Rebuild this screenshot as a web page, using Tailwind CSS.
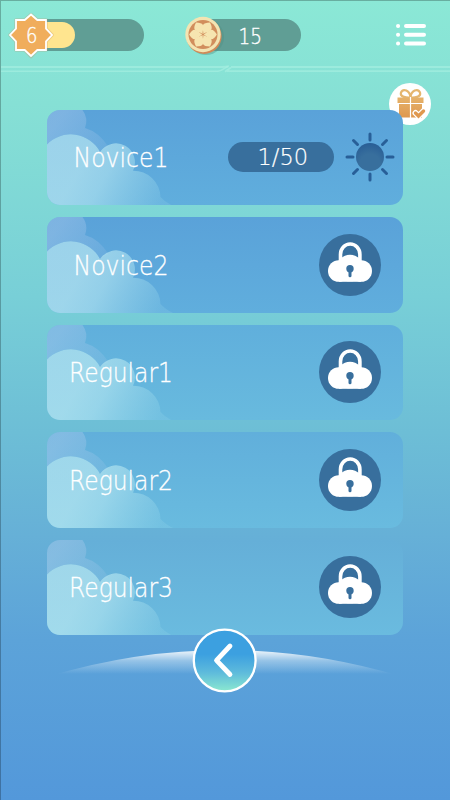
<!DOCTYPE html>
<html lang="en">
<head>
<meta charset="utf-8">
<title>Levels</title>
<script src="https://cdn.jsdelivr.net/npm/@tailwindcss/browser@4"></script>
</head>
<body class="bg-[#5398da]">
<svg class="absolute w-0 h-0" aria-hidden="true">
  <defs>
    <linearGradient id="front" gradientUnits="userSpaceOnUse" x1="35" y1="55" x2="112" y2="98">
      <stop offset="0" stop-color="#c0ecf3" stop-opacity=".64"/><stop offset=".3" stop-color="#b9e9f2" stop-opacity=".58"/><stop offset="1" stop-color="#a5e0ee" stop-opacity=".17"/>
    </linearGradient>
    <linearGradient id="back" gradientUnits="userSpaceOnUse" x1="15" y1="5" x2="65" y2="45">
      <stop offset="0" stop-color="#b3cdee" stop-opacity=".4"/><stop offset="1" stop-color="#b3cdee" stop-opacity=".1"/>
    </linearGradient>
    <radialGradient id="sun" cx=".5" cy=".75" r=".8"><stop offset=".45" stop-color="#386f9d"/><stop offset="1" stop-color="#275c95"/></radialGradient>
    <linearGradient id="gift" x1="0" y1="0" x2="0" y2="1"><stop offset="0" stop-color="#e5b26a"/><stop offset="1" stop-color="#df984f"/></linearGradient>
    <symbol id="cloud" viewBox="0 0 130 96">
      <path d="M0 0H35.5A19 19 0 0 1 38 18Q52 22 61.500 37A19 19 0 0 0 53 42A33 33 0 0 0 0 34.500Z" fill="url(#back)"/>
      <path d="M0 34.500A33 33 0 0 1 53 42A19 19 0 0 1 86 60.700A27 27 0 0 1 113.500 87Q118 92 126 96H0Z" fill="url(#front)"/>
    </symbol>
    <symbol id="lock" viewBox="0 0 62 62">
      <circle cx="31" cy="31" r="31" fill="#386f9d"/>
      <path d="M21.500 29V20.500A9.700 10.500 0 0 1 40.900 20.500V29" fill="none" stroke="#fff" stroke-width="3.600"/>
      <g fill="#fff"><circle cx="19.800" cy="37" r="10.800"/><circle cx="42.200" cy="37" r="10.800"/><circle cx="31" cy="34" r="13.300"/><rect x="19.800" y="30" width="22.400" height="17.800"/></g>
      <circle cx="31" cy="34.800" r="3.700" fill="#386f9d"/><path d="M31 35V41.800" stroke="#386f9d" stroke-width="3" stroke-linecap="round"/>
    </symbol>
  </defs>
</svg>
<main class="relative flex flex-col w-[450px] h-[800px] overflow-hidden text-white font-extralight font-['DejaVu_Sans','Lato',sans-serif] bg-origin-border bg-[linear-gradient(180deg,#8be8d6_0%,#86e0d5_13%,#78cfd7_37%,#6dbed6_54%,#66b0d7_67%,#5ca3d9_80%,#5398da_100%)] border-t border-l border-black/25">
  <header class="flex items-start h-[72px] shrink-0">
    <div class="relative mt-[18px] ml-[31px] w-[112px] h-[32px] rounded-r-full bg-[#609e95]">
      <div class="mt-[3px] w-[43px] h-[26px] rounded-r-full bg-[#ffe58f]"></div>
      <svg class="absolute -left-[27px] -top-[10px]" width="52" height="52" viewBox="0 0 52 52">
        <path d="M26 5.500L32.300 11H41V19.700L47 26L41 32.300V41H32.300L26 47.500L19.700 41H11V32.300L5 26L11 19.700V11H19.700Z" fill="#dc9551" opacity=".3" stroke="#c89564" stroke-width="3.600" stroke-linejoin="round"/>
        <path d="M26 5.500L32.300 11H41V19.700L47 26L41 32.300V41H32.300L26 47L19.700 41H11V32.300L5 26L11 19.700V11H19.700Z" fill="#f0ad5c" stroke="#fff" stroke-width="1.800"/>
        <text x="21" y="34" textLength="11.500" lengthAdjust="spacingAndGlyphs" font-size="22" fill="#fff" stroke="#fff" stroke-width=".4">6</text>
      </svg>
    </div>
    <div class="relative mt-[18px] ml-[62px] w-[95px] h-[32px] rounded-r-full bg-[#609e95]">
      <svg class="absolute -left-[22px] -top-[4px]" width="112" height="42" viewBox="0 0 112 42">
        <circle cx="22" cy="22" r="18" fill="#508f83" opacity=".4"/>
        <circle cx="20" cy="21.300" r="17.600" fill="#d18a58"/>
        <circle cx="19" cy="19.500" r="17.700" fill="#f3e4b2"/>
        <circle cx="19" cy="19.500" r="14.500" fill="#d18e5c"/>
        <g fill="#f6e5b0" transform="translate(19 19.500)">
          <path id="petal" d="M0 -.7C-.7 -2.500 -4.300 -5.500 -4.700 -8.500Q-4.700 -11 0 -13.900Q4.700 -11 4.700 -8.500C4.300 -5.500 .7 -2.500 0 -.7Z" transform="rotate(30)"/>
          <use href="#petal" transform="rotate(60)"/><use href="#petal" transform="rotate(120)"/><use href="#petal" transform="rotate(180)"/><use href="#petal" transform="rotate(240)"/><use href="#petal" transform="rotate(300)"/>
        </g>
        <text x="54.500" y="28.500" textLength="23.500" lengthAdjust="spacingAndGlyphs" font-size="22" fill="#fff" stroke="#fff" stroke-width=".4">15</text>
      </svg>
    </div>
    <svg class="mt-[22px] ml-[95px]" width="32" height="24" viewBox="0 0 32 24">
      <g stroke="#fff" stroke-width="4" stroke-linecap="round"><path d="M2 3H2.100M10 3H28M2 11.700H2.100M10 11.700H28M2 20.500H2.100M10 20.500H28"/></g>
    </svg>
  </header>
  <svg class="absolute -left-px top-[64px]" width="450" height="9" viewBox="0 0 450 9" fill="none" stroke="#a8efe2" stroke-opacity=".65">
    <path d="M0 2H222Q226 2 229 1.300" stroke-width="1.900"/><path d="M0 6.200H218Q221 6 225 3.200L228 1.500" stroke-width="1.500"/><path d="M231 2H450" stroke-width="1.900"/><path d="M225 6.700L231 2.500M227 6.200H450" stroke-width="1.800"/>
  </svg>
  <div class="absolute left-[388px] top-[82px] size-[42px] rounded-full bg-white">
    <svg width="42" height="42" viewBox="0 0 42 42">
      <g fill="none" stroke="#e5b66e" stroke-width="2.200"><path d="M21.500 14.500C18 15 10.500 14 12 9.500C14 5 21 7 21.500 14.500C22 7 29 5 31 9.500C32.500 14 25 15 21.500 14.500Z"/></g>
      <path d="M8.500 14.500H34.500V20H8.500ZM10 21H33V34.500H10Z" fill="url(#gift)"/>
      <path d="M21.500 14V35" stroke="#fff" stroke-width="1.200"/>
      <path d="M26.500 30L29.500 33L34.500 28" fill="none" stroke="#fff" stroke-width="6" stroke-linecap="round"/>
      <path d="M26.500 30L29.500 33L34.500 28" fill="none" stroke="#df984f" stroke-width="3.400" stroke-linecap="round"/>
    </svg>
  </div>
  <section class="relative mt-[36.500px] ml-[46px] w-[356px] flex flex-col gap-[12px]">
    <article class="relative h-[95.500px] rounded-[13px] overflow-hidden bg-linear-to-b from-[#5aa2d9] to-[#60aedd] flex items-center">
      <svg class="absolute left-0 top-0" width="130" height="96"><use href="#cloud"/></svg>
      <svg class="relative" width="181" height="96"><text x="26.500" y="57.500" textLength="95" lengthAdjust="spacingAndGlyphs" font-size="27" fill="#fff" stroke="#fff" stroke-width=".3">Novice1</text></svg>
      <div class="w-[106px] h-[30px] rounded-full bg-[#386f9d]"><svg width="106" height="30"><text x="29.500" y="23" textLength="50.500" lengthAdjust="spacingAndGlyphs" font-size="22.500" fill="#fff" stroke="#fff" stroke-width=".2">1/50</text></svg></div>
      <svg class="ml-[11px]" width="50" height="50" viewBox="-25 -25 50 50">
        <circle r="14" fill="url(#sun)"/>
        <g stroke="#285f98" stroke-width="3" stroke-linecap="round"><path d="M0 -17V-23M0 17V23M17 0H23M-17 0H-23M12.500 -12.500L16.500 -16.500M12.500 12.500L16.500 16.500M-12.500 12.500L-16.500 16.500M-12.500 -12.500L-16.500 -16.500"/></g>
      </svg>
    </article>
    <article class="relative h-[95.500px] rounded-[13px] overflow-hidden bg-linear-to-b from-[#5aa2d9] to-[#60aedd] flex items-center">
      <svg class="absolute left-0 top-0" width="130" height="96"><use href="#cloud"/></svg>
      <svg class="relative" width="272" height="96"><text x="26.500" y="57.500" textLength="95" lengthAdjust="spacingAndGlyphs" font-size="27" fill="#fff" stroke="#fff" stroke-width=".3">Novice2</text></svg>
      <svg width="62" height="62"><use href="#lock"/></svg>
    </article>
    <article class="relative h-[95.500px] rounded-[13px] overflow-hidden bg-linear-to-b from-[#60afdc] to-[#68bade] flex items-center">
      <svg class="absolute left-0 top-0" width="130" height="96"><use href="#cloud"/></svg>
      <svg class="relative" width="272" height="96"><text x="22" y="57.500" textLength="104" lengthAdjust="spacingAndGlyphs" font-size="27" fill="#fff" stroke="#fff" stroke-width=".3">Regular1</text></svg>
      <svg width="62" height="62"><use href="#lock"/></svg>
    </article>
    <article class="relative h-[95.500px] rounded-[13px] overflow-hidden bg-linear-to-b from-[#61afdb] to-[#69bbdf] flex items-center">
      <svg class="absolute left-0 top-0" width="130" height="96"><use href="#cloud"/></svg>
      <svg class="relative" width="272" height="96"><text x="22" y="57.500" textLength="104" lengthAdjust="spacingAndGlyphs" font-size="27" fill="#fff" stroke="#fff" stroke-width=".3">Regular2</text></svg>
      <svg width="62" height="62"><use href="#lock"/></svg>
    </article>
    <article class="relative h-[95.500px] rounded-[13px] overflow-hidden bg-linear-to-b from-[#65afd8] to-[#6abbdf] flex items-center">
      <svg class="absolute left-0 top-0" width="130" height="96"><use href="#cloud"/></svg>
      <svg class="relative" width="272" height="96"><text x="22" y="57.500" textLength="104" lengthAdjust="spacingAndGlyphs" font-size="27" fill="#fff" stroke="#fff" stroke-width=".3">Regular3</text></svg>
      <svg width="62" height="62"><use href="#lock"/></svg>
    </article>
  </section>
  <svg class="absolute -left-px top-[627px]" width="450" height="67" viewBox="0 0 450 67">
    <defs>
      <linearGradient id="horizon" gradientUnits="userSpaceOnUse" x1="0" y1="22" x2="0" y2="46"><stop offset="0" stop-color="#fff" stop-opacity=".92"/><stop offset=".45" stop-color="#fff" stop-opacity=".36"/><stop offset="1" stop-color="#fff" stop-opacity="0"/></linearGradient>
      <linearGradient id="button" x1="0" y1="0" x2="0" y2="1"><stop offset=".4" stop-color="#3ca0e0"/><stop offset=".68" stop-color="#5cb9dc"/><stop offset="1" stop-color="#8be8d0"/></linearGradient>
    </defs>
    <path d="M50 48Q225 -4 400 48Z" fill="url(#horizon)"/>
    <circle cx="224.700" cy="32.500" r="30.900" fill="url(#button)" stroke="#fff" stroke-width="2.300"/>
    <path d="M230 18L216.500 32.300L230 46.500" fill="none" stroke="#fff" stroke-width="4.800" stroke-linecap="round" stroke-linejoin="round"/>
  </svg>
</main>
</body>
</html>
